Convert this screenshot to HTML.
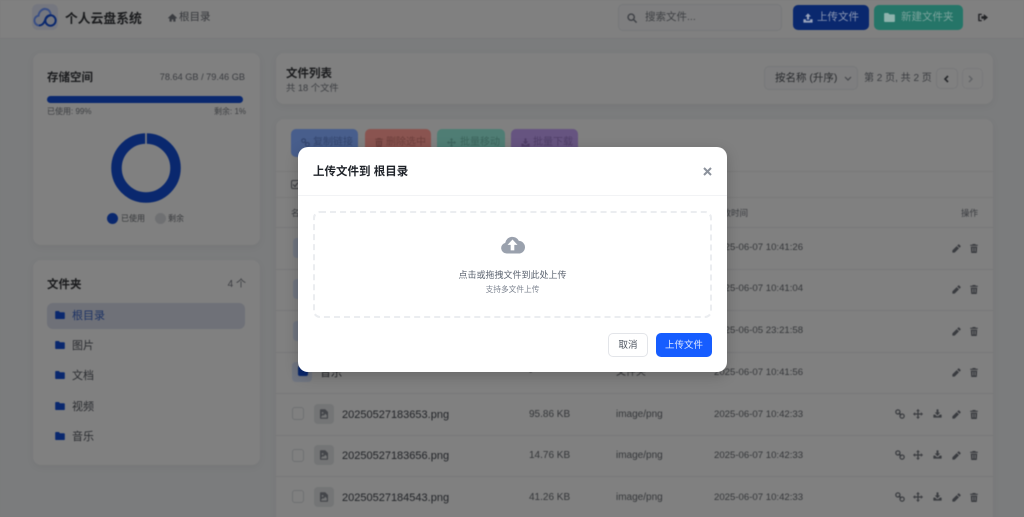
<!DOCTYPE html>
<html lang="zh"><head><meta charset="utf-8"><title>个人云盘系统</title>
<style>
*{box-sizing:border-box;margin:0;padding:0}
html,body{width:1024px;height:517px;overflow:hidden;background:#7a7b7c}
body{font-family:"Liberation Sans","Noto Sans CJK SC",sans-serif;position:relative}
#bg{position:absolute;inset:0;filter:blur(.6px);background:#7b7c7d}
.a{position:absolute;white-space:nowrap}
.card{position:absolute;background:#808080;border-radius:8px;box-shadow:0 2px 8px rgba(0,0,0,.05)}
svg{position:absolute;display:block}
.t{color:#222428;font-size:11px;line-height:14px}
.g{color:#35373a;font-size:10px;line-height:14px}
.tm{color:#35373a;font-size:9.600px;line-height:14px}
.ln{position:absolute;left:276px;width:717px;height:1px;background:#787879}
.ck{position:absolute;left:292px;width:12px;height:13px;border:1px solid #6f7072;border-radius:3px}
.ft{position:absolute;left:314px;width:20px;height:20px;background:#747576;border-radius:4px}
.btn{position:absolute;top:129px;height:28px;border-radius:5px;font-size:10px;line-height:28px;padding-left:22px}
#modal{position:absolute;left:298px;top:147px;width:429px;height:225px;background:#fff;border-radius:10px;box-shadow:0 4px 14px rgba(0,0,0,.2)}
</style></head><body>
<svg width="0" height="0" style="position:absolute"><defs>
<symbol id="folder" viewBox="0 0 24 20"><path d="M2 0h7l3 3h10a2 2 0 0 1 2 2v13a2 2 0 0 1-2 2H2a2 2 0 0 1-2-2V2a2 2 0 0 1 2-2z"/></symbol>
<symbol id="up" viewBox="0 0 24 24"><path d="M12 1 5 8.500h4.500V16h5V8.500H19zM1 15h6v3.500h10V15h6v8H1z"/></symbol>
<symbol id="down" viewBox="0 0 24 24"><path d="M9.500 1h5v8H19l-7 8-7-8h4.500zM1 15h5l3.500 4h5L18 15h5v8H1z"/></symbol>
<symbol id="trash" viewBox="0 0 20 24"><path d="M6.500 0h7L15 2h5v3H0V2h5zM1.500 7h17l-1 15.500A1.600 1.600 0 0 1 16 24H4a1.600 1.600 0 0 1-1.500-1.500zM6 10v10h2V10zm6 0v10h2V10z"/></symbol>
<symbol id="pen" viewBox="0 0 24 24"><path d="M16.500 1.500a2 2 0 0 1 2.800 0l3.200 3.200a2 2 0 0 1 0 2.800L20 10l-6-6zM12.500 5.500l6 6L7 23H1v-6z"/></symbol>
<symbol id="link" viewBox="0 0 24 24"><g fill="none" stroke="currentColor" stroke-width="3"><circle cx="7" cy="7" r="5"/><circle cx="17" cy="17" r="5"/><path d="m9 9 6 6"/></g></symbol>
<symbol id="move" viewBox="0 0 24 24"><path d="m12 0 4.500 5h-3v5.500H19v-3l5 4.500-5 4.500v-3h-5.500V19h3L12 24l-4.500-5h3v-5.500H5v3L0 12l5-4.500v3h5.500V5h-3z"/></symbol>
<symbol id="img" viewBox="0 0 20 24"><path fill-rule="evenodd" d="M2 0h11l7 7v15a2 2 0 0 1-2 2H2a2 2 0 0 1-2-2V2a2 2 0 0 1 2-2zm1 21h14v-6l-3.500-3.500-4.500 5-2-2L3 19zM6.500 7a2.300 2.300 0 1 0 .01 0z"/></symbol>
</defs></svg>

<div id="bg">
<!-- header -->
<div class="a" style="left:0;top:0;width:1024px;height:39px;background:#808080;border-bottom:1px solid #787879"></div>
<div class="a" style="left:32px;top:4px;width:26px;height:26px;border-radius:6px;background:#75777f"></div>
<svg style="left:32px;top:5px" width="26" height="24" viewBox="0 0 26 24" fill="none" stroke="#0a286e" stroke-width="2"><path d="M7 20.500a5 5 0 0 1-.5-9.900C7 6.500 10.500 3.500 13.500 4c3.500.5 5 3 5 5.500" stroke="#3a4f84"/><circle cx="18.500" cy="15.500" r="5.200"/><path d="M7 20.500c3.500 0 5-2.500 6-5s2.500-5 5.500-5"/></svg>
<div class="a" style="left:65px;top:10px;font-size:12.800px;line-height:18px;font-weight:700;color:#1a1b1d">个人云盘系统</div>
<svg style="left:168px;top:13px" width="9" height="9" viewBox="0 0 24 24" fill="#3a3c40"><path d="M12 2 0 13l2 2 2-1.800V23h6v-6h4v6h6v-9.800L22 15l2-2z"/></svg>
<div class="a" style="left:179px;top:10px;font-size:10.500px;line-height:15px;color:#35373b">根目录</div>
<div class="a" style="left:618px;top:4px;width:164px;height:27px;border:1px solid #77787a;border-radius:5px;background:#7e7e7f"></div>
<svg style="left:627px;top:13px" width="10" height="10" viewBox="0 0 24 24" fill="none" stroke="#3f4146" stroke-width="3.500"><circle cx="10" cy="10" r="7.500"/><path d="m16 16 7 7"/></svg>
<div class="a" style="left:645px;top:10px;font-size:10.500px;line-height:15px;color:#3f4144">搜索文件...</div>
<div class="a" style="left:793px;top:5px;width:76px;height:25px;border-radius:5px;background:#0a286e"></div>
<svg style="left:803px;top:13px" width="10" height="10" fill="#9aa4bc"><use href="#up"/></svg>
<div class="a" style="left:817px;top:10px;font-size:10.500px;line-height:15px;color:#8b97b2">上传文件</div>
<div class="a" style="left:874px;top:5px;width:89px;height:25px;border-radius:5px;background:#257568"></div>
<svg style="left:884px;top:13px" width="11" height="9" fill="#8fb3ad"><use href="#folder"/></svg>
<div class="a" style="left:901px;top:10px;font-size:10.500px;line-height:15px;color:#7ba39c">新建文件夹</div>
<svg style="left:978px;top:13px" width="10" height="9" viewBox="0 0 24 20" fill="#222326"><path d="M2 1h7v3H4v12h5v3H2a1.500 1.500 0 0 1-1.500-1.500v-15A1.500 1.500 0 0 1 2 1zM14 2l10 8-10 8v-5H8V7h6z"/></svg>

<!-- storage card -->
<div class="card" style="left:33px;top:53px;width:227px;height:192px"></div>
<div class="a" style="left:47px;top:70px;font-size:11.500px;line-height:17px;font-weight:700;color:#1a1b1d">存储空间</div>
<div class="a" style="left:145px;top:70px;width:100px;text-align:right;font-size:9.200px;line-height:14px;color:#3a3c40">78.64 GB / 79.46 GB</div>
<div class="a" style="left:47px;top:96px;width:196px;height:7px;border-radius:4px;background:#0a286e"></div>
<div class="a" style="left:47px;top:106px;font-size:8px;line-height:12px;color:#3c3e41">已使用: 99%</div>
<div class="a" style="left:214px;top:106px;font-size:8px;line-height:12px;color:#3c3e41">剩余: 1%</div>
<svg style="left:110px;top:131.500px" width="72" height="72" viewBox="0 0 72 72" fill="none"><circle cx="36" cy="36" r="29.500" stroke="#0a286e" stroke-width="10.500"/><path d="M36 1v12" stroke="#808080" stroke-width="1.600"/></svg>
<div class="a" style="left:107px;top:213px;width:11px;height:11px;border-radius:50%;background:#0a286e"></div>
<div class="a" style="left:121px;top:213px;font-size:8px;line-height:12px;color:#36383b">已使用</div>
<div class="a" style="left:155px;top:213px;width:11px;height:11px;border-radius:50%;background:#6f7072"></div>
<div class="a" style="left:168px;top:213px;font-size:8px;line-height:12px;color:#36383b">剩余</div>

<!-- folders card -->
<div class="card" style="left:33px;top:260px;width:227px;height:205px"></div>
<div class="a" style="left:47px;top:277px;font-size:11.500px;line-height:17px;font-weight:700;color:#1a1b1d">文件夹</div>
<div class="a" style="left:225px;top:278px;width:21px;text-align:right;font-size:10px;line-height:14px;color:#3a3c40">4 个</div>
<div class="a" style="left:47px;top:303px;width:198px;height:25.500px;border-radius:6px;background:#6f7178"></div>
<svg style="left:55px;top:311px" width="10" height="8" fill="#0a286e"><use href="#folder"/></svg><div class="a" style="left:72px;top:309px;font-size:11px;line-height:15px;color:#1c3264">根目录</div>
<svg style="left:55px;top:341px" width="10" height="8" fill="#0a286e"><use href="#folder"/></svg><div class="a" style="left:72px;top:339px;font-size:11px;line-height:15px;color:#2a2c30">图片</div>
<svg style="left:55px;top:371px" width="10" height="8" fill="#0a286e"><use href="#folder"/></svg><div class="a" style="left:72px;top:369px;font-size:11px;line-height:15px;color:#2a2c30">文档</div>
<svg style="left:55px;top:402px" width="10" height="8" fill="#0a286e"><use href="#folder"/></svg><div class="a" style="left:72px;top:400px;font-size:11px;line-height:15px;color:#2a2c30">视频</div>
<svg style="left:55px;top:432px" width="10" height="8" fill="#0a286e"><use href="#folder"/></svg><div class="a" style="left:72px;top:430px;font-size:11px;line-height:15px;color:#2a2c30">音乐</div>

<!-- list header card -->
<div class="card" style="left:276px;top:53px;width:717px;height:51px"></div>
<div class="a" style="left:286px;top:66px;font-size:11.500px;line-height:16px;font-weight:700;color:#1a1b1d">文件列表</div>
<div class="a" style="left:286px;top:81px;font-size:9.300px;line-height:14px;color:#3a3c40">共 18 个文件</div>
<div class="a" style="left:764px;top:66px;width:94px;height:24px;border:1px solid #777879;border-radius:5px;background:#7e7e7f"></div>
<div class="a" style="left:775px;top:71px;font-size:10.500px;line-height:15px;color:#2a2c2f">按名称 (升序)</div>
<svg style="left:844px;top:76px" width="8" height="5" viewBox="0 0 8 5" fill="none" stroke="#46484c" stroke-width="1.200"><path d="m1 1 3 3 3-3"/></svg>
<div class="a" style="left:864px;top:71px;font-size:10px;line-height:15px;color:#3a3c40">第 2 页, 共 2 页</div>
<div class="a" style="left:936px;top:68px;width:22px;height:21px;border:1px solid #77787a;border-radius:5px"></div>
<svg style="left:943px;top:75px" width="6" height="8" viewBox="0 0 6 8" fill="none" stroke="#25272a" stroke-width="1.600"><path d="M5 1 2 4l3 3"/></svg>
<div class="a" style="left:962px;top:68px;width:21px;height:21px;border:1px solid #7a7a7b;border-radius:5px"></div>
<svg style="left:968px;top:75px" width="6" height="8" viewBox="0 0 6 8" fill="none" stroke="#606265" stroke-width="1.400"><path d="m1 1 3 3-3 3"/></svg>

<!-- table card -->
<div class="card" style="left:276px;top:119px;width:717px;height:420px"></div>
<div class="btn" style="left:291px;width:67px;background:#485e8c;color:#34466e">复制链接</div>
<svg style="left:301px;top:138px;color:#34466e" width="9" height="9"><use href="#link"/></svg>
<div class="btn" style="left:365px;width:66px;background:#8a5450;color:#6e403d;padding-left:21px">删除选中</div>
<svg style="left:375px;top:138px" width="8" height="9" fill="#6e403d"><use href="#trash"/></svg>
<div class="btn" style="left:437px;width:68px;background:#4f7d74;color:#3d655d;padding-left:23px">批量移动</div>
<svg style="left:447px;top:138px" width="9" height="9" fill="#3d655d"><use href="#move"/></svg>
<div class="btn" style="left:511px;width:67px;background:#665480;color:#503f68">批量下载</div>
<svg style="left:521px;top:138px" width="9" height="9" fill="#503f68"><use href="#down"/></svg>
<div class="a" style="left:291px;top:180px;width:9px;height:9px;border:1px solid #3c3e42;border-radius:2px"></div>
<svg style="left:292px;top:181px" width="7" height="7" viewBox="0 0 7 7" fill="none" stroke="#3c3e42" stroke-width="1.200"><path d="m1 3.500 2 2 3-4"/></svg>
<div class="a" style="left:291px;top:206px;font-size:8.500px;line-height:14px;color:#3a3c40">名称</div>
<div class="a" style="left:714px;top:206px;font-size:8.500px;line-height:14px;color:#3a3c40">修改时间</div>
<div class="a" style="left:961px;top:206px;font-size:8.500px;line-height:14px;color:#3a3c40">操作</div>
<div class="ln" style="top:227px"></div><div class="ln" style="top:269px"></div><div class="ln" style="top:310px"></div><div class="ln" style="top:352px"></div><div class="ln" style="top:393px"></div><div class="ln" style="top:435px"></div><div class="ln" style="top:476px"></div>
<div class="ln" style="top:171px;background:#79797a"></div><div class="ln" style="top:197px;background:#79797a"></div>

<div class="a" style="left:293px;top:238px;width:18px;height:20px;border-radius:4px;background:#707580"></div>
<div class="a" style="left:293px;top:279px;width:18px;height:20px;border-radius:4px;background:#707580"></div>
<div class="a" style="left:293px;top:321px;width:18px;height:20px;border-radius:4px;background:#707580"></div>
<div class="a" style="left:292px;top:362px;width:20px;height:20px;border-radius:4px;background:#707580"></div>
<div class="a" style="left:298px;top:366px;width:10px;height:10px;background:#0a286e;border-radius:2px"></div>
<div class="a t" style="left:320px;top:366px">音乐</div>
<div class="a g" style="left:529px;top:366px">-</div>
<div class="a g" style="left:616px;top:366px">文件夹</div>

<div class="a tm" style="left:714px;top:241px">2025-06-07 10:41:26</div>
<div class="a tm" style="left:714px;top:282px">2025-06-07 10:41:04</div>
<div class="a tm" style="left:714px;top:324px">2025-06-05 23:21:58</div>
<div class="a tm" style="left:714px;top:366px">2025-06-07 10:41:56</div>

<div class="ck" style="top:407px"></div><div class="ft" style="top:404px"></div><svg style="left:320px;top:409px" width="8" height="10" fill="#44464a"><use href="#img"/></svg>
<div class="a t" style="left:342px;top:408px">20250527183653.png</div><div class="a g" style="left:529px;top:408px">95.86 KB</div><div class="a g" style="left:616px;top:408px">image/png</div><div class="a tm" style="left:714px;top:408px">2025-06-07 10:42:33</div>
<div class="ck" style="top:449px"></div><div class="ft" style="top:445px"></div><svg style="left:320px;top:450px" width="8" height="10" fill="#44464a"><use href="#img"/></svg>
<div class="a t" style="left:342px;top:449px">20250527183656.png</div><div class="a g" style="left:529px;top:449px">14.76 KB</div><div class="a g" style="left:616px;top:449px">image/png</div><div class="a tm" style="left:714px;top:449px">2025-06-07 10:42:33</div>
<div class="ck" style="top:490px"></div><div class="ft" style="top:487px"></div><svg style="left:320px;top:492px" width="8" height="10" fill="#44464a"><use href="#img"/></svg>
<div class="a t" style="left:342px;top:491px">20250527184543.png</div><div class="a g" style="left:529px;top:491px">41.26 KB</div><div class="a g" style="left:616px;top:491px">image/png</div><div class="a tm" style="left:714px;top:491px">2025-06-07 10:42:33</div>

<!-- row actions -->
<svg style="left:952px;top:244px" width="9" height="9" fill="#3a3c40"><use href="#pen"/></svg><svg style="left:970px;top:244px" width="8" height="9" fill="#3a3c40"><use href="#trash"/></svg>
<svg style="left:952px;top:285px" width="9" height="9" fill="#3a3c40"><use href="#pen"/></svg><svg style="left:970px;top:285px" width="8" height="9" fill="#3a3c40"><use href="#trash"/></svg>
<svg style="left:952px;top:327px" width="9" height="9" fill="#3a3c40"><use href="#pen"/></svg><svg style="left:970px;top:327px" width="8" height="9" fill="#3a3c40"><use href="#trash"/></svg>
<svg style="left:952px;top:368px" width="9" height="9" fill="#3a3c40"><use href="#pen"/></svg><svg style="left:970px;top:368px" width="8" height="9" fill="#3a3c40"><use href="#trash"/></svg>

<svg style="left:895px;top:409px;color:#3a3c40" width="10" height="10"><use href="#link"/></svg><svg style="left:913px;top:409px" width="10" height="10" fill="#3a3c40"><use href="#move"/></svg><svg style="left:933px;top:409px" width="9" height="9" fill="#3a3c40"><use href="#down"/></svg><svg style="left:952px;top:410px" width="9" height="9" fill="#3a3c40"><use href="#pen"/></svg><svg style="left:970px;top:410px" width="8" height="9" fill="#3a3c40"><use href="#trash"/></svg>
<svg style="left:895px;top:450px;color:#3a3c40" width="10" height="10"><use href="#link"/></svg><svg style="left:913px;top:450px" width="10" height="10" fill="#3a3c40"><use href="#move"/></svg><svg style="left:933px;top:450px" width="9" height="9" fill="#3a3c40"><use href="#down"/></svg><svg style="left:952px;top:451px" width="9" height="9" fill="#3a3c40"><use href="#pen"/></svg><svg style="left:970px;top:451px" width="8" height="9" fill="#3a3c40"><use href="#trash"/></svg>
<svg style="left:895px;top:492px;color:#3a3c40" width="10" height="10"><use href="#link"/></svg><svg style="left:913px;top:492px" width="10" height="10" fill="#3a3c40"><use href="#move"/></svg><svg style="left:933px;top:492px" width="9" height="9" fill="#3a3c40"><use href="#down"/></svg><svg style="left:952px;top:493px" width="9" height="9" fill="#3a3c40"><use href="#pen"/></svg><svg style="left:970px;top:493px" width="8" height="9" fill="#3a3c40"><use href="#trash"/></svg>
</div>

<!-- modal -->
<div id="modal">
<div class="a" style="left:15px;top:16px;font-size:11.500px;line-height:18px;font-weight:700;color:#1f2329">上传文件到 根目录</div>
<svg style="left:405px;top:20px" width="9" height="9" viewBox="0 0 9 9" fill="none" stroke="#8c929c" stroke-width="2"><path d="m1 1 7 7M8 1 1 8"/></svg>
<div class="a" style="left:0;top:48px;width:429px;height:1px;background:#f2f3f5"></div>
<div class="a" style="left:15px;top:64px;width:399px;height:107px;border:2px dashed #ebedf0;border-radius:7px"></div>
<svg style="left:202px;top:87px" width="25" height="20" viewBox="0 0 27 22"><path fill="#9aa1ad" d="M7 21.500a6 6 0 0 1-1.500-11.800A8 8 0 0 1 20.500 7.500 7 7 0 0 1 20 21.500z"/><path fill="#fff" d="m13.500 6 5.500 6h-3.500v6h-4v-6H8z"/></svg>
<div class="a" style="left:15px;top:121px;width:399px;text-align:center;font-size:9px;line-height:14px;color:#5c6470">点击或拖拽文件到此处上传</div>
<div class="a" style="left:15px;top:137px;width:399px;text-align:center;font-size:7.700px;line-height:12px;color:#7d8490">支持多文件上传</div>
<div class="a" style="left:310px;top:186px;width:40px;height:24px;border:1px solid #e3e5e9;border-radius:5px;text-align:center;font-size:9.500px;line-height:24px;color:#4e5560">取消</div>
<div class="a" style="left:358px;top:186px;width:56px;height:24px;background:#165dff;border-radius:5px;text-align:center;font-size:9.500px;line-height:25px;color:#dfe8ff">上传文件</div>
</div>
</body></html>
